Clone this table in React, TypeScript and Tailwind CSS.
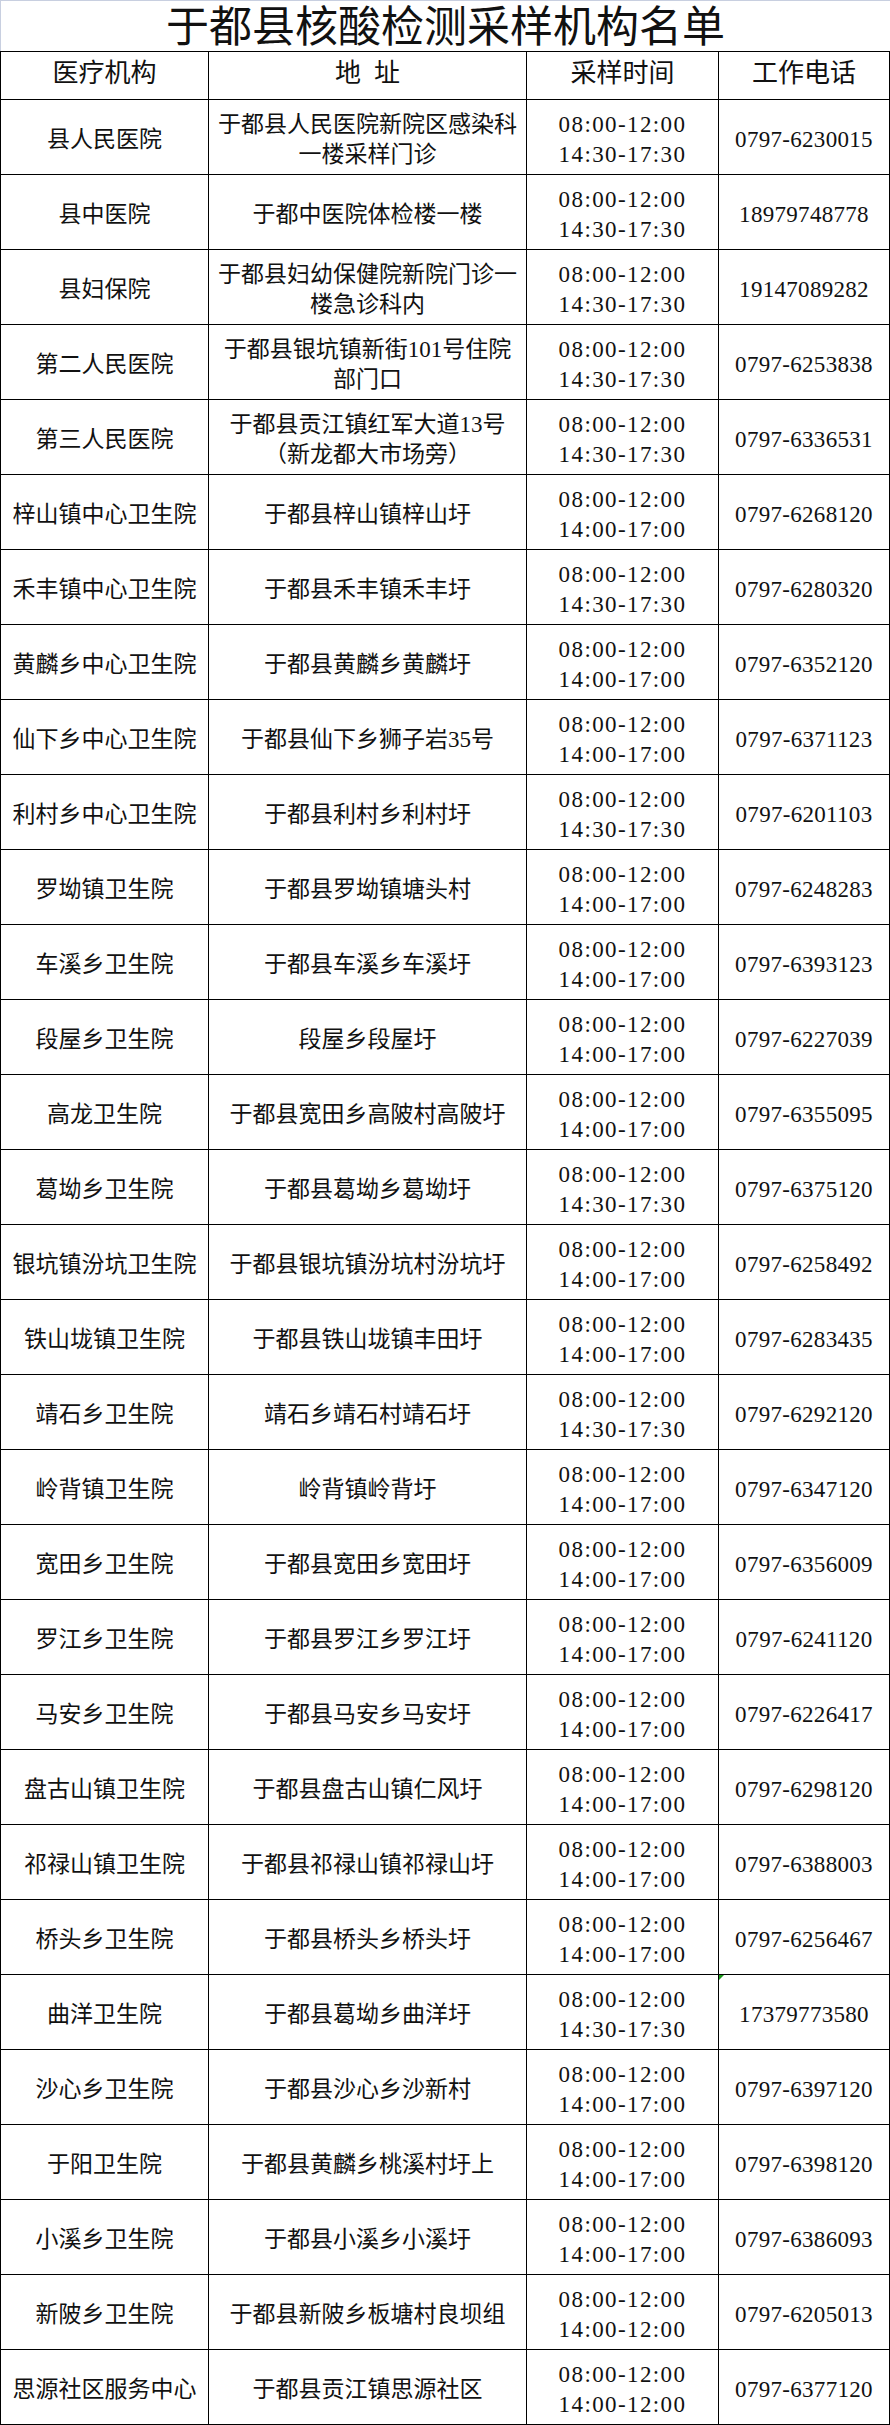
import React from "react";

type Row = {
  name: string;
  addr: string[];
  times: [string, string];
  phone: string;
  mark?: boolean;
};

const A = "08:00-12:00";
const P1 = "14:30-17:30";
const P2 = "14:00-17:00";
const P3 = "14:00-12:00";

const rows: Row[] = [
  { name: "县人民医院", addr: ["于都县人民医院新院区感染科", "一楼采样门诊"], times: [A, P1], phone: "0797-6230015" },
  { name: "县中医院", addr: ["于都中医院体检楼一楼"], times: [A, P1], phone: "18979748778" },
  { name: "县妇保院", addr: ["于都县妇幼保健院新院门诊一", "楼急诊科内"], times: [A, P1], phone: "19147089282" },
  { name: "第二人民医院", addr: ["于都县银坑镇新街101号住院", "部门口"], times: [A, P1], phone: "0797-6253838" },
  { name: "第三人民医院", addr: ["于都县贡江镇红军大道13号", "（新龙都大市场旁）"], times: [A, P1], phone: "0797-6336531" },
  { name: "梓山镇中心卫生院", addr: ["于都县梓山镇梓山圩"], times: [A, P2], phone: "0797-6268120" },
  { name: "禾丰镇中心卫生院", addr: ["于都县禾丰镇禾丰圩"], times: [A, P1], phone: "0797-6280320" },
  { name: "黄麟乡中心卫生院", addr: ["于都县黄麟乡黄麟圩"], times: [A, P2], phone: "0797-6352120" },
  { name: "仙下乡中心卫生院", addr: ["于都县仙下乡狮子岩35号"], times: [A, P2], phone: "0797-6371123" },
  { name: "利村乡中心卫生院", addr: ["于都县利村乡利村圩"], times: [A, P1], phone: "0797-6201103" },
  { name: "罗坳镇卫生院", addr: ["于都县罗坳镇塘头村"], times: [A, P2], phone: "0797-6248283" },
  { name: "车溪乡卫生院", addr: ["于都县车溪乡车溪圩"], times: [A, P2], phone: "0797-6393123" },
  { name: "段屋乡卫生院", addr: ["段屋乡段屋圩"], times: [A, P2], phone: "0797-6227039" },
  { name: "高龙卫生院", addr: ["于都县宽田乡高陂村高陂圩"], times: [A, P2], phone: "0797-6355095" },
  { name: "葛坳乡卫生院", addr: ["于都县葛坳乡葛坳圩"], times: [A, P1], phone: "0797-6375120" },
  { name: "银坑镇汾坑卫生院", addr: ["于都县银坑镇汾坑村汾坑圩"], times: [A, P2], phone: "0797-6258492" },
  { name: "铁山垅镇卫生院", addr: ["于都县铁山垅镇丰田圩"], times: [A, P2], phone: "0797-6283435" },
  { name: "靖石乡卫生院", addr: ["靖石乡靖石村靖石圩"], times: [A, P1], phone: "0797-6292120" },
  { name: "岭背镇卫生院", addr: ["岭背镇岭背圩"], times: [A, P2], phone: "0797-6347120" },
  { name: "宽田乡卫生院", addr: ["于都县宽田乡宽田圩"], times: [A, P2], phone: "0797-6356009" },
  { name: "罗江乡卫生院", addr: ["于都县罗江乡罗江圩"], times: [A, P2], phone: "0797-6241120" },
  { name: "马安乡卫生院", addr: ["于都县马安乡马安圩"], times: [A, P2], phone: "0797-6226417" },
  { name: "盘古山镇卫生院", addr: ["于都县盘古山镇仁风圩"], times: [A, P2], phone: "0797-6298120" },
  { name: "祁禄山镇卫生院", addr: ["于都县祁禄山镇祁禄山圩"], times: [A, P2], phone: "0797-6388003" },
  { name: "桥头乡卫生院", addr: ["于都县桥头乡桥头圩"], times: [A, P2], phone: "0797-6256467" },
  { name: "曲洋卫生院", addr: ["于都县葛坳乡曲洋圩"], times: [A, P1], phone: "17379773580", mark: true },
  { name: "沙心乡卫生院", addr: ["于都县沙心乡沙新村"], times: [A, P2], phone: "0797-6397120" },
  { name: "于阳卫生院", addr: ["于都县黄麟乡桃溪村圩上"], times: [A, P2], phone: "0797-6398120" },
  { name: "小溪乡卫生院", addr: ["于都县小溪乡小溪圩"], times: [A, P2], phone: "0797-6386093" },
  { name: "新陂乡卫生院", addr: ["于都县新陂乡板塘村良坝组"], times: [A, P3], phone: "0797-6205013" },
  { name: "思源社区服务中心", addr: ["于都县贡江镇思源社区"], times: [A, P3], phone: "0797-6377120" },
];

const cell =
  "h-[75px] border-r border-b border-black flex flex-col items-center justify-center text-center pt-[6px]";
const head =
  "h-[48px] border-r border-b border-black flex items-center justify-center text-[26px] leading-[30px] pb-[3px]";

export default function App() {
  return (
    <div className="w-[890px] bg-white text-[#111] font-['Liberation_Serif','Noto_Sans_CJK_SC',serif]">
      <div className="h-[51px] border-t border-l border-[#c8cfe0] flex items-center justify-center pt-[4px] text-[43px] leading-[46px]">
        于都县核酸检测采样机构名单
      </div>
      <div className="grid grid-cols-[208px_318px_192px_172px] border-t border-l border-black">
        <div className={head}>医疗机构</div>
        <div className={head}>地{"\u2002"}址</div>
        <div className={head}>采样时间</div>
        <div className={head + " border-r-2"}>工作电话</div>
        {rows.map((r, i) => (
          <React.Fragment key={i}>
            <div className={cell + " text-[23px] leading-[30px]"}>{r.name}</div>
            <div className={cell + " text-[23px] leading-[30px]"}>
              {r.addr.map((l, j) => (
                <div key={j}>{l}</div>
              ))}
            </div>
            <div className={cell + " text-[23px] leading-[30px] tracking-[1.4px]"}>
              <div>{r.times[0]}</div>
              <div>{r.times[1]}</div>
            </div>
            <div className={cell + " relative border-r-2 text-[23px] leading-[30px] tracking-[0.3px]"}>
              {r.mark && (
                <span className="absolute top-0 left-0 w-0 h-0 border-t-[5px] border-t-[#1c9a1c] border-r-[5px] border-r-transparent" />
              )}
              {r.phone}
            </div>
          </React.Fragment>
        ))}
      </div>
    </div>
  );
}
